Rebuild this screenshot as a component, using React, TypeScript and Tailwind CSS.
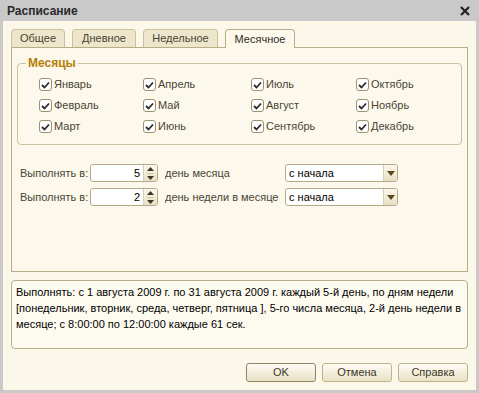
import React from 'react';

const months = [
    ['Январь', 'Апрель', 'Июль', 'Октябрь'],
    ['Февраль', 'Май', 'Август', 'Ноябрь'],
    ['Март', 'Июнь', 'Сентябрь', 'Декабрь'],
];

function Check({ label }: { label: string }) {
    return (
        <div className="flex items-center h-[21px]">
            <span className="w-[13px] h-[13px] rounded-[3px] border border-[#9c9270] bg-white flex items-center justify-center">
                <svg width="9" height="8" viewBox="0 0 9 8">
                    <path d="M1 4 L3.5 6.5 L8 1.5" stroke="#2b2b2b" strokeWidth="1.8" fill="none" />
                </svg>
            </span>
            <span className="ml-[2px] text-[#4a4434]">{label}</span>
        </div>
    );
}

function Spinner({ value }: { value: string }) {
    return (
        <div className="flex w-[68px] h-[18px] border border-[#b3aa85] rounded-[3px] bg-white overflow-hidden">
            <div className="flex-1 text-right pr-[3px] leading-[16px] text-black">{value}</div>
            <div className="w-[14px] border-l border-[#d6cfb0] bg-gradient-to-b from-[#fbf9ee] to-[#e7e0c4] flex flex-col items-center justify-center gap-[2px]">
                <svg width="7" height="4" viewBox="0 0 7 4"><path d="M0 4 L3.5 0 L7 4 Z" fill="#3a3322" /></svg>
                <div className="w-[7px] h-px bg-[#cfc7a6]" />
                <svg width="7" height="4" viewBox="0 0 7 4"><path d="M0 0 L3.5 4 L7 0 Z" fill="#3a3322" /></svg>
            </div>
        </div>
    );
}

function Combo() {
    return (
        <div className="flex w-[113px] h-[18px] border border-[#b3aa85] rounded-[3px] bg-white overflow-hidden">
            <div className="flex-1 pl-[3px] leading-[16px] text-black">с начала</div>
            <div className="w-[14px] border-l border-[#d6cfb0] bg-gradient-to-b from-[#fbf9ee] to-[#e7e0c4] flex items-center justify-center">
                <svg width="8" height="5" viewBox="0 0 8 5"><path d="M0 0 L4 5 L8 0 Z" fill="#5a4518" /></svg>
            </div>
        </div>
    );
}

function Tab({ label, active, width }: { label: string; active?: boolean; width: string }) {
    return (
        <div
            className={`${width} h-[18px] border border-b-0 rounded-t-[4px] flex items-center justify-center ${
                active
                    ? 'bg-[#fcf9ec] border-[#b7ae88] text-[#2f2b20] relative top-px h-[19px]'
                    : 'bg-[#ede6cb] border-[#c9c1a0] text-[#4a4434]'
            }`}
        >
            {label}
        </div>
    );
}

function Btn({ label, def }: { label: string; def?: boolean }) {
    return (
        <button
            className={`w-[70px] h-[19px] rounded-[3px] border bg-gradient-to-b from-[#fdfcf5] to-[#e9e2c6] text-[#3d3828] leading-[17px] ${
                def ? 'border-[#8f8562]' : 'border-[#bdb38e]'
            }`}
        >
            {label}
        </button>
    );
}

export default function App() {
    return (
        <div
            className="w-[479px] h-[393px] bg-[#c9c9c9] flex flex-col text-[11px]"
            style={{ fontFamily: '"Liberation Sans", Arial, sans-serif' }}
        >
            {/* Title bar */}
            <div className="h-[21px] flex items-center justify-between pl-[7px] pr-[9px]">
                <span className="font-bold text-[12px] text-[#2a2a2a]">Расписание</span>
                <svg width="10" height="10" viewBox="0 0 10 10">
                    <path d="M1 1 L9 9 M9 1 L1 9" stroke="#222" strokeWidth="2.2" />
                </svg>
            </div>

            {/* Body */}
            <div className="flex-1 mx-[3px] mb-[3px] bg-[#fbf8e9] px-[8px] pt-[8px] flex flex-col">
                {/* Tabs */}
                <div className="flex gap-[7px] h-[18px] items-end">
                    <Tab label="Общее" width="w-[54px]" />
                    <Tab label="Дневное" width="w-[64px]" />
                    <Tab label="Недельное" width="w-[75px]" />
                    <Tab label="Месячное" width="w-[70px]" active />
                </div>

                {/* Tab panel */}
                <div className="h-[225px] border border-[#b7ae88] bg-[#fcf9ec] px-[5px] pt-[8px]">
                    <fieldset className="border border-[#c9c1a0] rounded-[4px] pb-[6px] h-[89px]">
                        <legend className="ml-[8px] px-[2px] font-bold text-[12px] text-[#b67e09] leading-[14px]">Месяцы</legend>
                        <div className="grid grid-cols-[104px_108px_105px_auto] pt-[4px] pl-[21px]">
                            {months.map((row) =>
                                row.map((m) => <Check key={m} label={m} />)
                            )}
                        </div>
                    </fieldset>

                    <div className="mt-[19px] flex flex-col gap-[6px] pl-[3px]">
                        <div className="flex items-center">
                            <span className="w-[70px] text-[#4a4434]">Выполнять в:</span>
                            <Spinner value="5" />
                            <span className="w-[127px] pl-[7px] text-[#4a4434]">день месяца</span>
                            <Combo />
                        </div>
                        <div className="flex items-center">
                            <span className="w-[70px] text-[#4a4434]">Выполнять в:</span>
                            <Spinner value="2" />
                            <span className="w-[127px] pl-[7px] text-[#4a4434]">день недели в месяце</span>
                            <Combo />
                        </div>
                    </div>
                </div>

                {/* Description */}
                <div className="mt-[8px] h-[69px] border border-[#b7ae88] rounded-[4px] bg-[#fdfbf0] px-[4px] pt-[3px] leading-[16px] text-black">
                    Выполнять: с 1 августа 2009 г. по 31 августа 2009 г. каждый 5-й день, по дням недели
                    [понедельник, вторник, среда, четверг, пятница ], 5-го числа месяца, 2-й день недели в
                    месяце; с 8:00:00 по 12:00:00 каждые 61 сек.
                </div>

                {/* Buttons */}
                <div className="mt-[14px] flex justify-end gap-[6px]">
                    <Btn label="OK" def />
                    <Btn label="Отмена" />
                    <Btn label="Справка" />
                </div>
            </div>
        </div>
    );
}
